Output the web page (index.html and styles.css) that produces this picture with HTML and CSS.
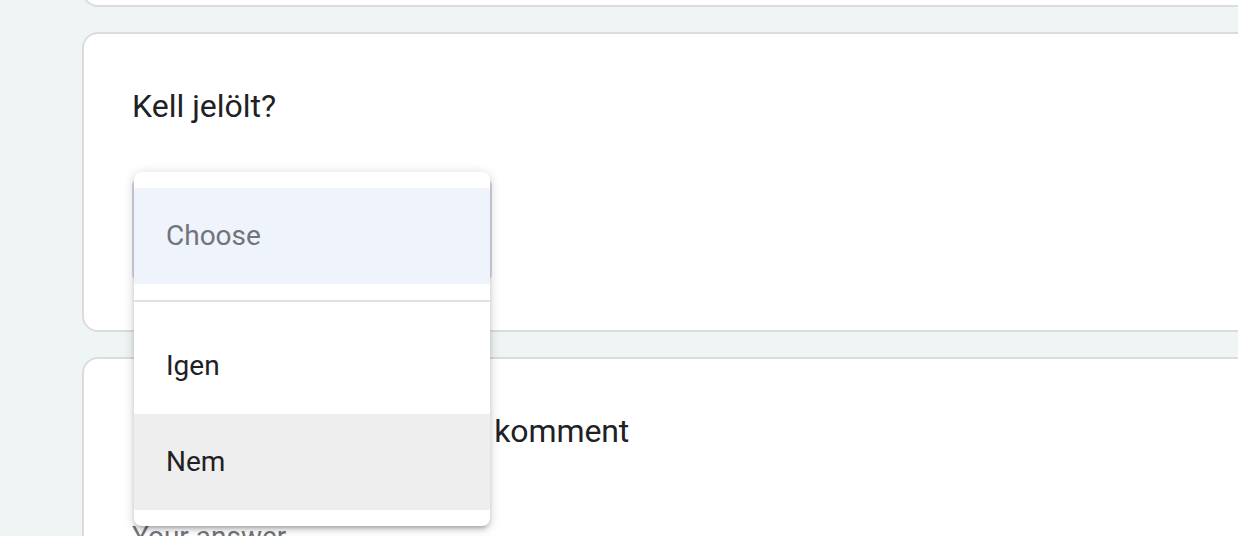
FILE: index.html
```html
<!DOCTYPE html>
<html lang="hu">
<head>
<meta charset="utf-8">
<title>Kell jelölt?</title>
<link rel="stylesheet" href="styles.css">
</head>
<body>
<div class="page">
  <section class="card card-prev"></section>
  <section class="card">
    <h2 class="q-title">Kell jelölt?</h2>
    <div class="select-wrap">
      <div class="select"></div>
      <ul class="menu">
        <li class="opt opt-placeholder">Choose</li>
        <li class="sep"></li>
        <li class="opt">Igen</li>
        <li class="opt opt-hover">Nem</li>
      </ul>
    </div>
  </section>
  <section class="card card-last">
    <h2 class="q-title q-title-tight">Bármilyen további kérdés komment</h2>
    <div class="answer">Your answer</div>
  </section>
</div>
</body>
</html>
```
FILE: styles.css
```css
html, body {
  margin: 0;
  padding: 0;
  overflow: hidden;
  background: #eff5f4;
  font-family: Roboto, "Noto Sans", Arial, sans-serif;
  color: #202124;
}
.page {
  display: flex;
  flex-direction: column;
  gap: 25px;
  margin-top: -60px;
  padding-left: 82px;
  width: 1250px;
}
.card {
  background: #fff;
  border: 2px solid #dadce0;
  border-radius: 16px;
  padding: 48px 0 48px 48px;
}
.card-prev {
  height: 67px;
  padding: 0;
  box-sizing: border-box;
}
.card-last {
  height: 400px;
}
.q-title {
  margin: 0;
  font-size: 32px;
  line-height: 48px;
  font-weight: 400;
}
.q-title-tight {
  letter-spacing: -0.1px;
}
.select-wrap {
  position: relative;
  margin-top: 48px;
  width: 360px;
}
.select {
  height: 104px;
  box-sizing: border-box;
  border: 2px solid #dadce0;
  border-radius: 8px;
}
.menu {
  position: absolute;
  top: -6px;
  left: 2px;
  width: 356px;
  margin: 0;
  padding: 16px 0;
  list-style: none;
  background: #fff;
  border-radius: 8px;
  box-shadow: 0 4px 4px rgba(0,0,0,.12), 0 6px 2px -4px rgba(0,0,0,.1), 0 2px 12px rgba(0,0,0,.18);
}
.opt {
  height: 96px;
  line-height: 96px;
  padding-left: 32px;
  font-size: 28px;
  color: #202124;
}
.opt-placeholder {
  background: #eff4fc;
  color: #70757a;
}
.opt-hover {
  background: #eeeeee;
}
.sep {
  height: 2px;
  margin: 16px 0;
  background: #e0e0e0;
}
.answer {
  margin-top: 62px;
  font-size: 28px;
  line-height: 40px;
  color: #70757a;
}
```
